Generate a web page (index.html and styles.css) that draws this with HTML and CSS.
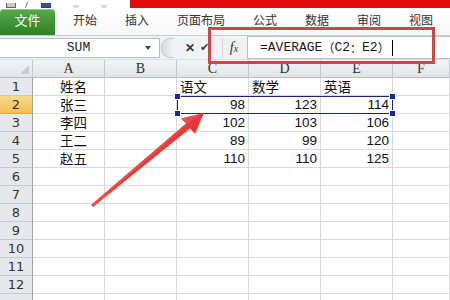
FILE: index.html
```html
<!DOCTYPE html>
<html lang="zh-CN">

<head>
    <meta charset="UTF-8">
    <title>AVERAGE</title>
    <link rel="stylesheet" href="styles.css">
</head>

<body>
<div class="page">
  <div class="titlebar">
    <div class="qa">
      <i class="qicon dark"></i>
      <i class="qsep"></i>
      <i class="qicon blue"></i>
      <i class="qdot"></i>
      <i class="qdot"></i>
    </div>
    <div class="redbar"></div>
  </div>

  <div class="tabs">
    <span class="tab file">文件</span>
    <span class="tab">开始</span>
    <span class="tab">插入</span>
    <span class="tab">页面布局</span>
    <span class="tab">公式</span>
    <span class="tab">数据</span>
    <span class="tab">审阅</span>
    <span class="tab">视图</span>
  </div>

  <div class="fbar">
    <div class="namebox">
      <span class="name">SUM</span>
      <span class="drop"></span>
    </div>
    <span class="grip"></span>
    <span class="btn cancel">✕</span>
    <span class="btn ok">✔</span>
    <span class="fx"><i>f</i><small>x</small></span>
    <div class="formula">=AVERAGE<span class="cjk">（</span>C2<span class="cjk">：</span>E2<span class="cjk">）</span><span class="caret"></span></div>
  </div>

  <div class="sheet">
    <div class="corner"></div>
    <div class="colhead">A</div>
    <div class="colhead">B</div>
    <div class="colhead">C</div>
    <div class="colhead">D</div>
    <div class="colhead">E</div>
    <div class="colhead">F</div>

    <div class="rowhead">1</div>
    <div class="cell name">姓名</div><div class="cell"></div><div class="cell txt">语文</div><div class="cell txt">数学</div><div class="cell txt">英语</div><div class="cell"></div>

    <div class="rowhead active">2</div>
    <div class="cell name">张三</div><div class="cell"></div><div class="cell num">98</div><div class="cell num">123</div><div class="cell num">114</div><div class="cell"></div>

    <div class="rowhead">3</div>
    <div class="cell name">李四</div><div class="cell"></div><div class="cell num">102</div><div class="cell num">103</div><div class="cell num">106</div><div class="cell"></div>

    <div class="rowhead">4</div>
    <div class="cell name">王二</div><div class="cell"></div><div class="cell num">89</div><div class="cell num">99</div><div class="cell num">120</div><div class="cell"></div>

    <div class="rowhead">5</div>
    <div class="cell name">赵五</div><div class="cell"></div><div class="cell num">110</div><div class="cell num">110</div><div class="cell num">125</div><div class="cell"></div>

    <div class="rowhead">6</div>
    <div class="cell"></div><div class="cell"></div><div class="cell"></div><div class="cell"></div><div class="cell"></div><div class="cell"></div>
    <div class="rowhead">7</div>
    <div class="cell"></div><div class="cell"></div><div class="cell"></div><div class="cell"></div><div class="cell"></div><div class="cell"></div>
    <div class="rowhead">8</div>
    <div class="cell"></div><div class="cell"></div><div class="cell"></div><div class="cell"></div><div class="cell"></div><div class="cell"></div>
    <div class="rowhead">9</div>
    <div class="cell"></div><div class="cell"></div><div class="cell"></div><div class="cell"></div><div class="cell"></div><div class="cell"></div>
    <div class="rowhead">10</div>
    <div class="cell"></div><div class="cell"></div><div class="cell"></div><div class="cell"></div><div class="cell"></div><div class="cell"></div>
    <div class="rowhead">11</div>
    <div class="cell"></div><div class="cell"></div><div class="cell"></div><div class="cell"></div><div class="cell"></div><div class="cell"></div>
    <div class="rowhead">12</div>
    <div class="cell"></div><div class="cell"></div><div class="cell"></div><div class="cell"></div><div class="cell"></div><div class="cell"></div>
    <div class="rowhead"></div>
    <div class="cell"></div><div class="cell"></div><div class="cell"></div><div class="cell"></div><div class="cell"></div><div class="cell"></div>
  </div>

  <!-- 选区 C2:E2 -->
  <div class="selection">
    <i class="handle tl"></i>
    <i class="handle bl"></i>
    <i class="handle tr"></i>
    <i class="handle br"></i>
  </div>

  <!-- 标注 -->
  <div class="mark"></div>
  <svg class="arrow" width="450" height="300" viewBox="0 0 450 300">
    <polygon points="91,205 186,123.5 181,118.5 204,113 195,134 190,128.5 93,207" fill="#e53b37"/>
    <polygon points="91,205 186,123.5 181,118.5 204,113 192,120 93,207" fill="#ee5a55" opacity="0.6"/>
  </svg>
</div>
</body>

</html>
```

FILE: styles.css
```css
body {
    margin: 0;
    background: #fff;
}

.page {
    position: relative;
    width: 450px;
    height: 300px;
    overflow: hidden;
    font-family: "Liberation Sans", "Noto Sans CJK SC", sans-serif;
}

/* 顶部标题栏残留 */
.titlebar {
    height: 8px;
    display: flex;
}

.qa {
    width: 130px;
    display: flex;
    align-items: flex-end;
    gap: 4px;
    padding-left: 6px;
    box-sizing: border-box;
}

.qicon {
    width: 8px;
    height: 4px;
    border: 1px solid #666;
    border-top: none;
}

.qicon.dark {
    background: #c8c8c8;
}

.qicon.blue {
    background: #3a4e9a;
    border-color: #2c3c7c;
    margin-left: 10px;
}

.qsep {
    width: 1px;
    height: 6px;
    background: #777;
    margin-left: 6px;
    transform: rotate(20deg);
}

.qdot {
    width: 6px;
    height: 3px;
    border-radius: 0 0 3px 3px;
    background: #d6d6d6;
    margin-left: 18px;
}

.redbar {
    flex: 1;
    background: #e20a0a;
}

/* 选项卡 */
.tabs {
    height: 28px;
    display: flex;
    align-items: flex-end;
    border-bottom: 1px solid #c9cdd3;
    box-sizing: border-box;
    background: linear-gradient(#fff, #f7f8fa);
}

.tab {
    height: 26px;
    line-height: 24px;
    padding: 0 14px;
    font-size: 12px;
    color: #333;
}

.tab.file {
    width: 55px;
    padding: 0;
    margin-right: 4px;
    text-align: center;
    color: #fff;
    font-size: 13px;
    border-radius: 4px 4px 0 0;
    background: linear-gradient(#58a94a, #2f7f27);
    box-shadow: inset 0 1px 0 #8fcb80;
}

/* 编辑栏 */
.fbar {
    height: 24px;
    display: flex;
    align-items: center;
    background: #f1f2f4;
    border-bottom: 1px solid #dde0e4;
    box-sizing: border-box;
}

.namebox {
    width: 160px;
    height: 20px;
    display: flex;
    align-items: center;
    background: #fff;
    border: 1px solid #b9bec6;
    border-left: none;
    box-sizing: border-box;
}

.name {
    flex: 1;
    text-align: center;
    font-family: "Liberation Mono", "DejaVu Sans Mono", monospace;
    font-size: 13px;
    color: #222;
    padding-left: 12px;
}

.drop {
    width: 0;
    height: 0;
    margin-right: 8px;
    border-left: 3.5px solid transparent;
    border-right: 3.5px solid transparent;
    border-top: 4px solid #444;
}

.grip {
    width: 12px;
    height: 18px;
    margin-left: 1px;
    border-radius: 9px 0 0 9px;
    background: linear-gradient(90deg, #d7dade, #f4f5f7);
    border: 1px solid #c4c8ce;
    border-right: none;
}

.btn {
    width: 15px;
    text-align: center;
    font-size: 12px;
    color: #333;
}

.btn.cancel {
    margin-left: 8px;
    font-weight: bold;
}

.btn.ok {
    color: #3b3b3b;
    font-size: 11px;
}

.fx {
    width: 22px;
    margin-left: 10px;
    height: 20px;
    line-height: 19px;
    text-align: center;
    color: #333;
    font-family: "Liberation Serif", serif;
    font-size: 14px;
    border-left: 1px solid #d0d3d8;
}

.fx small {
    font-size: 10px;
    font-style: italic;
}

.formula {
    flex: 1;
    height: 21px;
    margin-left: 2px;
    display: flex;
    align-items: center;
    padding-left: 12px;
    background: #fff;
    border: 1px solid #b9bec6;
    border-right: none;
    font-family: "Liberation Mono", "DejaVu Sans Mono", monospace;
    font-size: 13px;
    color: #1b1b1b;
}

.formula .cjk {
    font-family: "Noto Sans CJK SC", sans-serif;
    font-size: 12px;
}

.caret {
    width: 1px;
    height: 16px;
    margin-left: 2px;
    background: #000;
}

/* 工作表 */
.sheet {
    display: grid;
    grid-template-columns: 33px repeat(5, 72px) 1fr;
    grid-auto-rows: 18px;
}

.corner,
.colhead,
.rowhead {
    background: linear-gradient(#f3f4f6, #e2e4e8);
    border-right: 1px solid #c3c7cd;
    border-bottom: 1px solid #b8bcc3;
    box-sizing: border-box;
    color: #333;
    text-align: center;
}

.corner {
    position: relative;
}

.corner::after {
    content: "";
    position: absolute;
    right: 3px;
    bottom: 3px;
    border-left: 9px solid transparent;
    border-bottom: 9px solid #c8cbd0;
}

.colhead {
    font-family: "Liberation Serif", serif;
    font-size: 14px;
    line-height: 18px;
}

.rowhead {
    font-family: "DejaVu Sans", sans-serif;
    font-size: 13px;
    line-height: 18px;
    background: #e6e8ec;
    border-right: 1px solid #9ea3ab;
    border-bottom: 1px solid #c6c9ce;
}

.rowhead.active {
    background: linear-gradient(#f9d98a, #f2bf55);
    border-bottom-color: #d7a848;
}

.cell {
    border-right: 1px solid #d9d9d9;
    border-bottom: 1px solid #d9d9d9;
    box-sizing: border-box;
    font-size: 14px;
    line-height: 18px;
    color: #111;
    white-space: nowrap;
}

.cell.name {
    padding-left: 10px;
    font-family: "Noto Sans CJK SC", sans-serif;
    font-size: 13.5px;
    line-height: 17px;
}

.cell.txt {
    padding-left: 3px;
    font-family: "Noto Sans CJK SC", sans-serif;
    font-size: 13.5px;
    line-height: 17px;
}

.cell.num {
    text-align: right;
    padding-right: 3px;
    font-size: 13.5px;
}

/* 选区与标注 */
.selection {
    position: absolute;
    left: 177px;
    top: 96px;
    width: 216px;
    height: 18px;
    border: 1.5px solid #1c2380;
    box-sizing: border-box;
}

.handle {
    position: absolute;
    width: 5px;
    height: 5px;
    background: #1b27a8;
    border: 1px solid #fff;
}

.handle.tl { left: -4px; top: -4px; }
.handle.bl { left: -4px; bottom: -4px; }
.handle.tr { right: -4px; top: -4px; }
.handle.br { right: -4px; bottom: -4px; }

.mark {
    position: absolute;
    left: 208px;
    top: 27px;
    width: 227px;
    height: 37px;
    border: 3px solid #c9484b;
    box-sizing: border-box;
}

.arrow {
    position: absolute;
    left: 0;
    top: 0;
    pointer-events: none;
}
```
